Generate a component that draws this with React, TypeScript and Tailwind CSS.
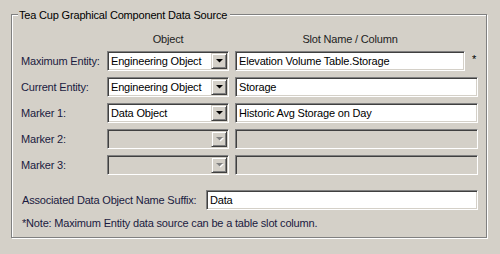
import React from "react";

const sunken =
  "border border-t-[#808080] border-l-[#808080] border-b-white border-r-white shadow-[inset_1px_1px_0_#404040,inset_-1px_-1px_0_#d4d0c8]";

function Arrow({ disabled }: { disabled?: boolean }) {
  return (
    <svg width="7" height="4" viewBox="0 0 7 4" className="overflow-visible">
      {disabled && <path d="M1 1h7L4.5 4.5z" fill="#ffffff" />}
      <path d="M0 0h7L3.5 3.5z" fill={disabled ? "#808080" : "#000000"} />
    </svg>
  );
}

function Combo({ value, disabled }: { value?: string; disabled?: boolean }) {
  return (
    <div
      className={`${sunken} w-[122px] h-[20px] flex items-stretch p-[1px] ${
        disabled ? "bg-[#d4d0c8]" : "bg-white"
      }`}
    >
      <div className="flex-1 flex items-center pl-[2px] text-black whitespace-nowrap overflow-hidden">
        {value}
      </div>
      <div className="w-[16px] h-[16px] flex items-center justify-center bg-[#d4d0c8] border border-t-[#d4d0c8] border-l-[#d4d0c8] border-b-[#404040] border-r-[#404040] shadow-[inset_1px_1px_0_#fff,inset_-1px_-1px_0_#808080]">
        <Arrow disabled={disabled} />
      </div>
    </div>
  );
}

function Field({
  value,
  disabled,
  w,
}: {
  value?: string;
  disabled?: boolean;
  w: string;
}) {
  return (
    <div
      className={`${sunken} ${w} h-[20px] flex items-center pl-[3px] text-black whitespace-nowrap overflow-hidden ${
        disabled ? "bg-[#d4d0c8]" : "bg-white"
      }`}
    >
      {value}
    </div>
  );
}

export default function App() {
  const rows = [
    { label: "Maximum Entity:", combo: "Engineering Object", field: "Elevation Volume Table.Storage", star: true },
    { label: "Current Entity:", combo: "Engineering Object", field: "Storage" },
    { label: "Marker 1:", combo: "Data Object", field: "Historic Avg Storage on Day" },
    { label: "Marker 2:", disabled: true },
    { label: "Marker 3:", disabled: true },
  ];
  return (
    <div className="w-[500px] h-[254px] bg-[#d4d0c8] pt-[14px] pl-[11px] font-['Liberation_Sans',Arial,sans-serif] text-[11px] leading-[13px] tracking-[-0.18px] text-[#1a1a40]">
      <div className="relative w-[476px] h-[224px] border border-[#808080] shadow-[inset_1px_1px_0_#fff,1px_1px_0_#fff] pt-[18px] pl-[9px]">
        <div className="absolute left-[6px] top-[-6px] pl-[1px] pr-[3px] bg-[#d4d0c8] text-black leading-[13px]">
          Tea Cup Graphical Component Data Source
        </div>
        <div className="flex h-[13px] text-[#222]">
          <div className="w-[86px]" />
          <div className="w-[122px] text-center">Object</div>
          <div className="ml-[6px] w-[230px] text-center">Slot Name / Column</div>
        </div>
        <div className="mt-[5px] flex flex-col gap-[6px]">
          {rows.map((r) => (
            <div key={r.label} className="flex items-center h-[20px]">
              <div className="w-[86px] whitespace-nowrap">{r.label}</div>
              <Combo value={r.combo} disabled={r.disabled} />
              <div className="ml-[6px] flex items-center">
                {r.star ? (
                  <>
                    <Field value={r.field} w="w-[230px]" />
                    <span className="ml-[7px] text-black relative -top-[2px]">*</span>
                  </>
                ) : (
                  <Field value={r.field} disabled={r.disabled} w="w-[243px]" />
                )}
              </div>
            </div>
          ))}
        </div>
        <div className="mt-[15px] flex items-center h-[20px]">
          <div className="w-[185px] whitespace-nowrap pl-[1px]">Associated Data Object Name Suffix:</div>
          <Field value="Data" w="w-[272px]" />
        </div>
        <div className="mt-[7px] pl-[1px]">*Note: Maximum Entity data source can be a table slot column.</div>
      </div>
    </div>
  );
}
